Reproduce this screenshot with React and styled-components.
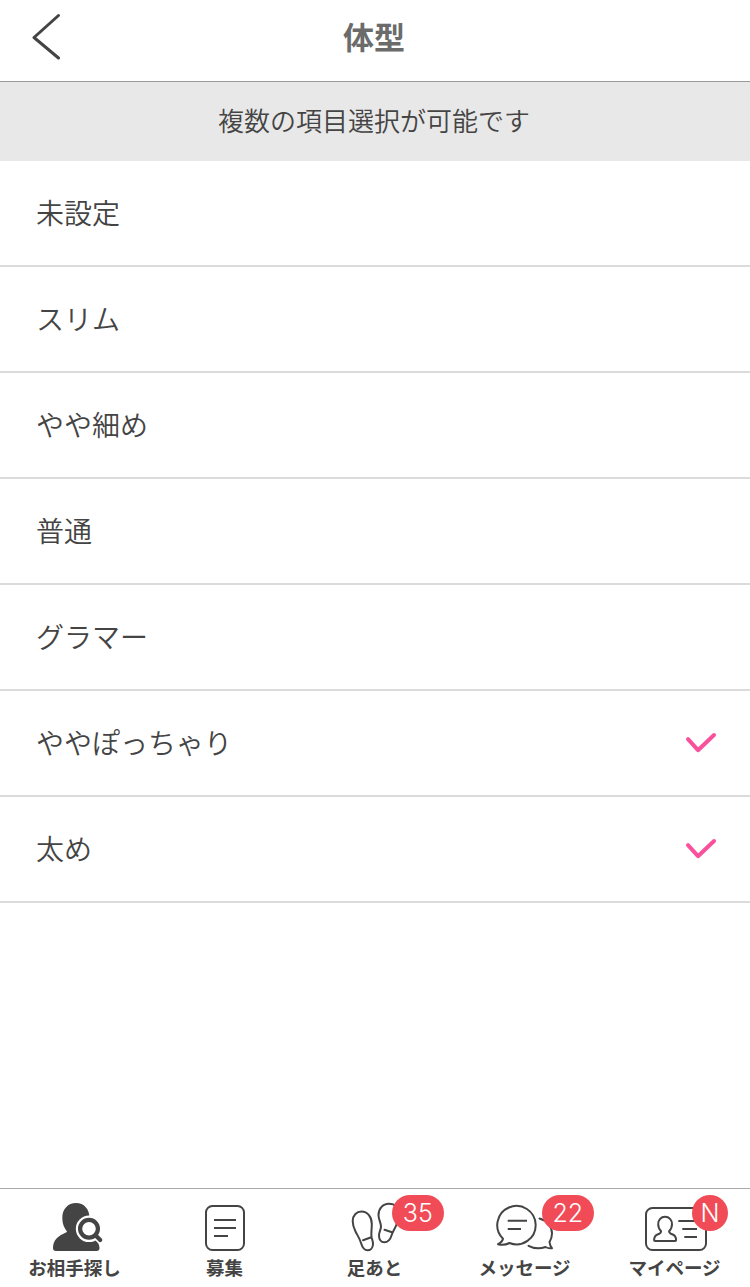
import React, { useState } from 'react';
import styled, { createGlobalStyle } from 'styled-components';

const GlobalStyle = createGlobalStyle`
  * {
    box-sizing: border-box;
  }

  body {
    margin: 0;
    background: #fff;
    color: #444;
    font-family: 'Noto Sans CJK JP', sans-serif;
  }

  button {
    border: 0;
    padding: 0;
    background: none;
    color: inherit;
    font: inherit;
    cursor: pointer;
  }
`;

const Page = styled.div`
  display: flex;
  flex-direction: column;
  height: 1287px;
`;

const Header = styled.header`
  display: grid;
  grid-template-columns: 90px 1fr 92px;
  align-items: center;
  height: 82px;
  padding-bottom: 9px;
  border-bottom: 1px solid #999;
`;

const BackButton = styled.button`
  display: flex;
  align-items: center;
  height: 72px;
  padding-left: 30px;
`;

const Title = styled.h1`
  margin: 0;
  color: #6b6b6b;
  font-size: 31px;
  font-weight: 700;
  line-height: 72px;
  text-align: center;
`;

const Notice = styled.p`
  height: 79px;
  margin: 0;
  padding-right: 2px;
  background: #e8e8e8;
  font-size: 26px;
  font-weight: 350;
  line-height: 76px;
  text-align: center;
`;

const List = styled.ul`
  flex: 1;
  margin: 0;
  padding: 0;
  list-style: none;
`;

const Row = styled.li`
  display: flex;
  align-items: center;
  justify-content: space-between;
  height: 106px;
  padding: 0 32px 0 36px;
  border-bottom: 2px solid #dbdbdb;
  font-size: 28px;
  font-weight: 350;
  cursor: pointer;
`;

const RowLabel = styled.span`
  padding-bottom: 2px;
`;

const TabBar = styled.nav`
  display: grid;
  grid-template-columns: repeat(5, 1fr);
  height: 99px;
  border-top: 1px solid #aaa;
`;

const Tab = styled.button`
  position: relative;
  display: flex;
  flex-direction: column;
  align-items: center;
  padding-top: 11px;
`;

const TabIcon = styled.svg`
  width: 72px;
  height: 52px;
  fill: none;
  stroke: #444;
  stroke-width: 2;
  stroke-linecap: round;
  stroke-linejoin: round;
`;

const TabLabel = styled.span`
  margin-top: 2px;
  padding-right: 1px;
  font-size: 18.5px;
  font-weight: 700;
  line-height: 26px;
  white-space: nowrap;
`;

const Badge = styled.span`
  position: absolute;
  top: 6px;
  left: ${props => (props.$round ? 92 : 91.5)}px;
  width: ${props => (props.$round ? 36 : 52.5)}px;
  height: 36px;
  border-radius: 18px;
  background: #f04b57;
  color: #fff;
  font-family: Inter, sans-serif;
  font-size: 25px;
  font-weight: 350;
  line-height: 36px;
  text-align: center;
`;

const SearchIcon = () => (
  <TabIcon viewBox="0 0 72 52">
    <path
      fill="#444"
      stroke="none"
      d="M37 3c8 0 13.500 6 13.500 15 0 6-2 10-4.500 13.500 0 2 2 3 5 4.500 6 3 9.500 7 9.500 12 0 2-1 3-3 3H17c-2 0-3-1-3-3 0-8 5.500-12 10-14 2-1 3.500-1.500 4-2.500-2.700-3.500-4.700-7.500-4.700-13.500C23.300 9 29 3 37 3z"
    />
    <circle cx="50" cy="28.800" r="13.200" fill="#fff" stroke="none" />
    <path stroke="#fff" strokeWidth="7" d="M57 36l4.500 4.500" />
    <circle cx="50" cy="28.800" r="8.900" strokeWidth="4.200" fill="#fff" />
    <path strokeWidth="4.200" d="M56.500 35.300l4.700 4.700" />
  </TabIcon>
);

const RecruitIcon = () => (
  <TabIcon viewBox="0 0 72 52">
    <rect x="17" y="6" width="38" height="44" rx="6.500" />
    <path strokeLinecap="butt" d="M25 20h22M25 28h22M25 36h14" />
  </TabIcon>
);

const FootprintIcon = () => (
  <TabIcon viewBox="0 0 72 52">
    <path d="M22.500 11.600c6 0 10.300 5.400 10.300 12.400 0 6-1 9.500-.2 13.500.6 2.500 1.600 4 1.400 7-.3 3.500-2.600 5.800-5.500 5.800-4 0-5.300-3.300-6.500-7.300-1.500-5-3.500-7.500-5.500-11.500-1.600-3.200-2.800-6.500-2.800-10.500 0-5.500 3.700-9.400 8.800-9.400zM24 40.200l8.300-3" />
    <path d="M50 3.800c-6.500 0-10.500 5-10.500 11.200 0 5 2.500 7.500 2.500 11.500 0 3-2 5.500-2 9 0 4 2 6.800 5.300 6.800 3.700 0 6-2.800 7.200-6.800 1.500-5 3.500-6.500 5-11 1-3 2.300-6 2.300-10C59.800 8 56 3.800 50 3.800zM45.500 29.800l7.500 2.400" />
  </TabIcon>
);

const MessageIcon = () => (
  <TabIcon viewBox="0 0 72 52">
    <path d="M14 38.800A19.200 19.200 0 1 1 20.500 43c-3.500 1.800-8 2.200-11.500 1.200 2.500-1.200 4.500-2.900 5-5.400z" />
    <path d="M50.500 18.500C58 20.500 63 26.500 63 33.500c0 3.500-1 6-2.500 8.500.3 3 1.200 4.700 2.500 6.200-2.500.4-4.500 0-6.500-1.200-6 2.200-12 1.500-17-1.200" />
    <path strokeLinecap="butt" d="M18.700 20.800H38M18.700 29h13.300" />
  </TabIcon>
);

const MyPageIcon = () => (
  <TabIcon viewBox="0 0 72 52">
    <rect x="7" y="8" width="60" height="42" rx="6.500" />
    <path d="M26 16.800c-4 0-6.800 3.200-6.800 7.400 0 2.800 1.200 5.300 2.900 7-.1 2-1.300 2.400-3.100 3.100-2.700 1.100-3.900 3.300-3.900 5.700 0 .7.400 1 1 1h20c.6 0 1-.3 1-1 0-2.400-1.200-4.600-3.900-5.700-1.800-.7-3-1.100-3.100-3.100 1.700-1.700 2.900-4.200 2.900-7 0-4.200-2.800-7.400-7-7.400z" />
    <path strokeLinecap="butt" d="M39.300 20.900H58M43.300 29H58M45.300 37H58" />
  </TabIcon>
);

const Check = () => (
  <svg width="34" height="26" viewBox="0 0 34 26" fill="none" stroke="#f9519b" strokeWidth="4">
    <path strokeLinecap="round" strokeLinejoin="round" d="M4 9.200l10 11L30 5" />
  </svg>
);

const options = [
  '未設定',
  'スリム',
  'やや細め',
  '普通',
  'グラマー',
  'ややぽっちゃり',
  '太め'
];

const tabs = [
  { label: 'お相手探し', icon: SearchIcon },
  { label: '募集', icon: RecruitIcon },
  { label: '足あと', icon: FootprintIcon, badge: '35' },
  { label: 'メッセージ', icon: MessageIcon, badge: '22' },
  { label: 'マイページ', icon: MyPageIcon, badge: 'N' }
];

const App = () => {
  const [selected, setSelected] = useState(['ややぽっちゃり', '太め']);

  const toggle = option =>
    setSelected(
      selected.includes(option)
        ? selected.filter(item => item !== option)
        : [...selected, option]
    );

  return (
    <>
      <GlobalStyle />
      <Page>
        <Header>
          <BackButton aria-label="戻る">
            <svg width="32" height="48" viewBox="0 0 32 48" fill="none" stroke="#444" strokeWidth="3">
              <path strokeLinecap="round" strokeLinejoin="round" d="M28.500 3.500L4 25.500l24.500 20.500" />
            </svg>
          </BackButton>
          <Title>体型</Title>
        </Header>
        <Notice>複数の項目選択が可能です</Notice>
        <List>
          {options.map(option => (
            <Row key={option} onClick={() => toggle(option)}>
              <RowLabel>{option}</RowLabel>
              {selected.includes(option) && <Check />}
            </Row>
          ))}
        </List>
        <TabBar>
          {tabs.map(({ label, icon: Icon, badge }) => (
            <Tab key={label}>
              <Icon />
              <TabLabel>{label}</TabLabel>
              {badge && <Badge $round={badge.length === 1}>{badge}</Badge>}
            </Tab>
          ))}
        </TabBar>
      </Page>
    </>
  );
};

export default App;
